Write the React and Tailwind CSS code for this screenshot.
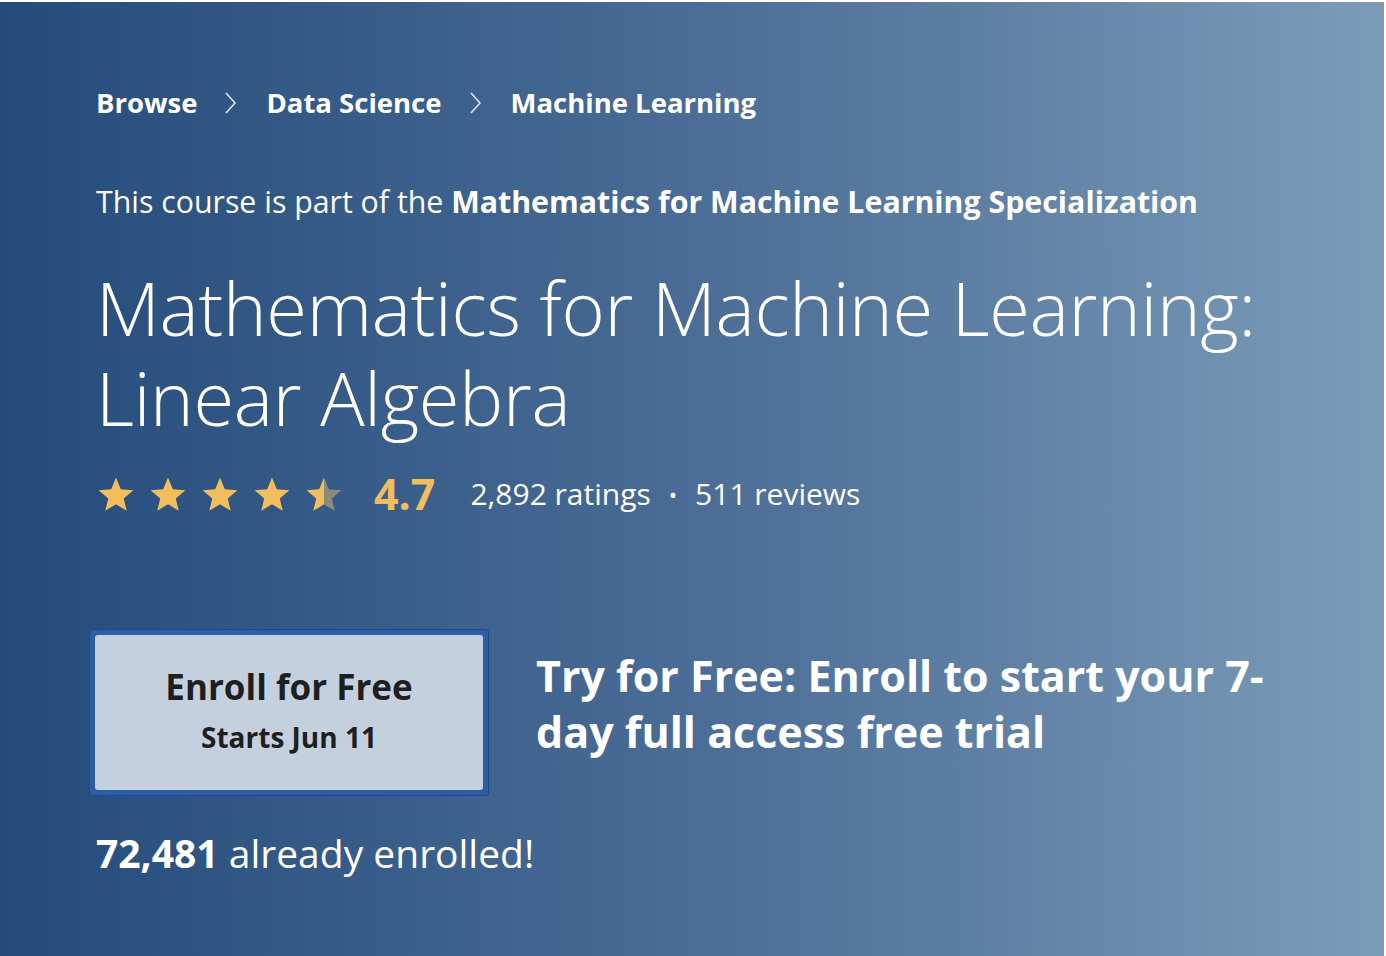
import React from "react";

const STAR = "12,1.5 14.9,8.6 22.5,9.2 16.7,14.2 18.5,21.7 12,17.7 5.5,21.7 7.3,14.2 1.5,9.2 9.1,8.6";

function Star({ half }) {
  return (
    <svg width="40" height="38" viewBox="0 0 24 23" className="shrink-0">
      {half ? (
        <>
          <defs>
            <linearGradient id="halfg" x1="0" x2="1" y1="0" y2="0">
              <stop offset="50%" stopColor="#f1bd5d" />
              <stop offset="50%" stopColor="#8c8a7a" />
            </linearGradient>
          </defs>
          <polygon points={STAR} fill="url(#halfg)" />
        </>
      ) : (
        <polygon points={STAR} fill="#f1bd5d" />
      )}
    </svg>
  );
}

function Chevron() {
  return (
    <svg width="13" height="26" viewBox="0 0 13 26" className="ml-[27px] mr-[29px]">
      <polyline points="2,3 11,13 2,23" fill="none" stroke="#dfe6ef" strokeWidth="1.6" />
    </svg>
  );
}

export default function App() {
  return (
    <div
      className="w-[1386px] h-[956px] bg-white pt-[2px] pr-[2px] overflow-hidden"
      style={{ fontFamily: '"Open Sans", "Noto Sans", sans-serif' }}
    >
      <div className="w-full h-full bg-gradient-to-r from-[#244b7b] via-[#4a6c96] to-[#7c9cb8] pl-[96px] pt-[85px] text-white">
        <nav className="flex items-center h-[32px] text-[27.5px] font-bold leading-[32px]">
          <span>Browse</span>
          <Chevron />
          <span>Data Science</span>
          <Chevron />
          <span>Machine Learning</span>
        </nav>

        <p className="mt-[64px] text-[30.3px] leading-[38px]">
          This course is part of the <span className="font-bold">Mathematics for Machine Learning Specialization</span>
        </p>

        <h1 className="mt-[42px] text-[74px] font-light leading-[90px] tracking-[-0.3px]">
          Mathematics for Machine Learning:
          <br />
          Linear Algebra
        </h1>

        <div className="mt-[29px] flex items-center h-[44px]">
          <div className="flex items-center gap-[12px]">
            <Star />
            <Star />
            <Star />
            <Star />
            <Star half />
          </div>
          <span className="ml-[30px] text-[43px] font-bold text-[#f1bd5d] leading-[44px]">4.7</span>
          <span className="ml-[35px] text-[30px] leading-[44px]">2,892 ratings</span>
          <span className="mx-[18px] text-[22px] leading-[44px]">•</span>
          <span className="text-[30px] leading-[44px]">511 reviews</span>
        </div>

        <div className="mt-[114px] ml-[-6px] flex items-start">
          <div className="rounded-[3px] bg-[#2c5ea8] p-[5px] shadow-[0_0_0_1px_#1f4a85]">
            <button className="flex h-[155px] w-[388px] flex-col items-center justify-center rounded-[3px] bg-[#c4d0de] pb-[6px] text-[#1f1f1f]">
              <span className="text-[35px] font-bold leading-[42px]">Enroll for Free</span>
              <span className="mt-[12px] text-[28px] font-bold leading-[34px]">Starts Jun 11</span>
            </button>
          </div>
          <p className="ml-[48px] mt-[18px] w-[760px] text-[43px] font-bold leading-[56px]">
            Try for Free: Enroll to start your 7-day full access free trial
          </p>
        </div>

        <p className="mt-[33px] text-[39px] leading-[50px]">
          <span className="font-bold">72,481</span> already enrolled!
        </p>
      </div>
    </div>
  );
}
